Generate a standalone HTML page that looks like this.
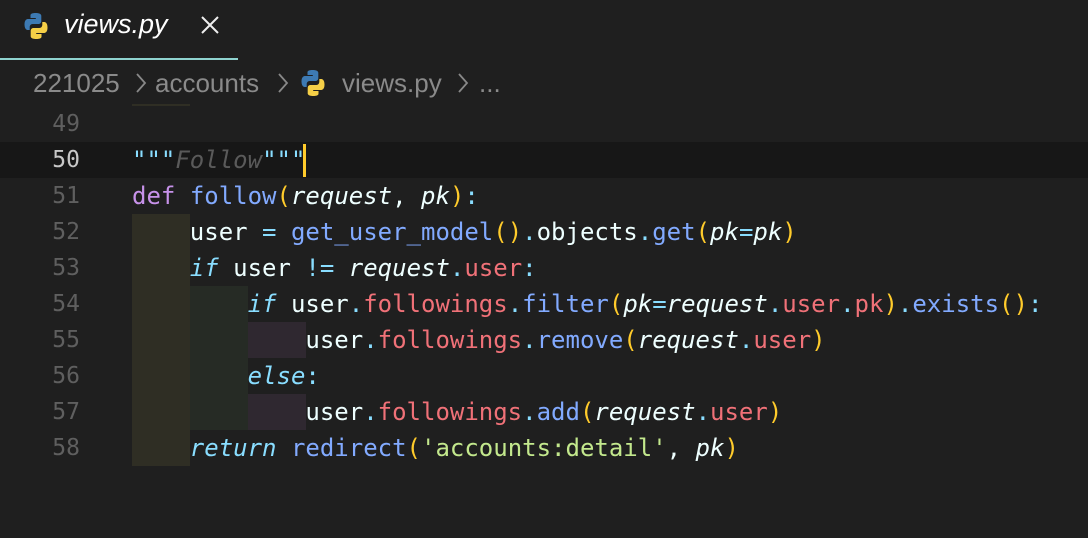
<!DOCTYPE html>
<html><head><meta charset="utf-8"><style>
body{margin:0;width:1088px;height:538px;background:#1f1f1f;overflow:hidden;font-family:"Liberation Sans",sans-serif;position:relative}
.tabbar{position:absolute;left:0;top:0;width:1088px;height:60px;background:#1f1f1f}
.tab{position:absolute;left:0;top:0;width:238px;height:58px;border-bottom:2px solid #8fd3cf}
.tabname{position:absolute;left:64px;top:9px;font-size:27px;font-style:italic;color:#fff}
.bc{position:absolute;top:68px;font-size:26px;color:#8a8a8a;white-space:nowrap}
.ln{position:absolute;left:0;width:80px;text-align:right;font-family:"DejaVu Sans Mono",monospace;font-size:23px;color:#5f5f5f;height:36px;line-height:36px}
.code{position:absolute;left:132px;font-family:"DejaVu Sans Mono",monospace;font-size:24px;height:36px;line-height:36px;white-space:pre;color:#eeffff}
.p{color:#c792ea}.f{color:#82aaff}.y{color:#ffcb2b}.i{font-style:italic}.r{color:#f07178}.k{color:#89ddff;font-style:italic}.s{color:#c3e88d}.c{color:#89ddff}.g{color:#5a5a5a;font-style:italic}
.blk{position:absolute}
.chev{position:absolute;top:73px}
</style></head><body>
<div class="tabbar"><div class="tab"></div>
<svg style="position:absolute;left:22px;top:12px" width="28" height="28" viewBox="0 0 28 28"><path d="M13.5 1C8 1 8.5 3.4 8.5 3.4V6h5.3v1H6.2S2.5 6.6 2.5 12.4s3.2 5.6 3.2 5.6h2v-2.8s-.1-3.2 3.2-3.2h5.4s3 .1 3-2.9V3.9S19.8 1 13.5 1z" fill="#3d7ab3"/><path d="M14.5 27c5.5 0 5-2.4 5-2.4V22h-5.3v-1h7.6s3.7.4 3.7-5.4-3.2-5.6-3.2-5.6h-2v2.8s.1 3.2-3.2 3.2h-5.4s-3-.1-3 2.9v5.2S8.2 27 14.5 27z" fill="#f5cf47"/></svg>
<div class="tabname">views.py</div>
<svg style="position:absolute;left:201px;top:16px" width="18" height="18" viewBox="0 0 18 18"><path d="M1 1L17 17M17 1L1 17" stroke="#eee" stroke-width="2"/></svg>
</div>
<div class="bc" style="left:33px">221025</div>
<svg class="chev" style="left:135px" width="12" height="20" viewBox="0 0 12 20"><path d="M2 1L10 10L2 19" stroke="#888" stroke-width="1.8" fill="none"/></svg>
<div class="bc" style="left:155px">accounts</div>
<svg class="chev" style="left:277px" width="12" height="20" viewBox="0 0 12 20"><path d="M2 1L10 10L2 19" stroke="#888" stroke-width="1.8" fill="none"/></svg>
<svg style="position:absolute;left:299px;top:69px" width="28" height="28" viewBox="0 0 28 28"><path d="M13.5 1C8 1 8.5 3.4 8.5 3.4V6h5.3v1H6.2S2.5 6.6 2.5 12.4s3.2 5.6 3.2 5.6h2v-2.8s-.1-3.2 3.2-3.2h5.4s3 .1 3-2.9V3.9S19.8 1 13.5 1z" fill="#3d7ab3"/><path d="M14.5 27c5.5 0 5-2.4 5-2.4V22h-5.3v-1h7.6s3.7.4 3.7-5.4-3.2-5.6-3.2-5.6h-2v2.8s.1 3.2-3.2 3.2h-5.4s-3-.1-3 2.9v5.2S8.2 27 14.5 27z" fill="#f5cf47"/></svg>
<div class="bc" style="left:342px">views.py</div>
<svg class="chev" style="left:457px" width="12" height="20" viewBox="0 0 12 20"><path d="M2 1L10 10L2 19" stroke="#888" stroke-width="1.8" fill="none"/></svg>
<div class="bc" style="left:479px">...</div>
<div class="blk" style="left:132px;top:104px;width:58px;height:2px;background:#2f2e24"></div>
<div class="blk" style="left:0;top:142px;width:1088px;height:36px;background:#171717"></div>
<div class="blk" style="left:303px;top:144px;width:3px;height:33px;background:#ffcb2b"></div>
<div class="blk" style="left:132px;top:214px;width:58px;height:252px;background:#2f2e24"></div>
<div class="blk" style="left:190px;top:286px;width:58px;height:144px;background:#262b25"></div>
<div class="blk" style="left:248px;top:322px;width:58px;height:36px;background:#2f2830"></div>
<div class="blk" style="left:248px;top:394px;width:58px;height:36px;background:#2f2830"></div>
<div class="ln" style="top:106px">49</div>
<div class="ln" style="top:142px;color:#c8c8c8">50</div>
<div class="ln" style="top:178px">51</div>
<div class="ln" style="top:214px">52</div>
<div class="ln" style="top:250px">53</div>
<div class="ln" style="top:286px">54</div>
<div class="ln" style="top:322px">55</div>
<div class="ln" style="top:358px">56</div>
<div class="ln" style="top:394px">57</div>
<div class="ln" style="top:430px">58</div>
<div class="code" style="top:142px"><span class="c">"""</span><span class="g">Follow</span><span class="c">"""</span></div>
<div class="code" style="top:178px"><span class="p">def</span> <span class="f">follow</span><span class="y">(</span><span class="i">request</span>, <span class="i">pk</span><span class="y">)</span><span class="c">:</span></div>
<div class="code" style="top:214px">    user <span class="c">=</span> <span class="f">get_user_model</span><span class="y">()</span><span class="c">.</span>objects<span class="c">.</span><span class="f">get</span><span class="y">(</span><span class="i">pk</span><span class="c">=</span><span class="i">pk</span><span class="y">)</span></div>
<div class="code" style="top:250px">    <span class="k">if</span> user <span class="c">!=</span> <span class="i">request</span><span class="c">.</span><span class="r">user</span><span class="c">:</span></div>
<div class="code" style="top:286px">        <span class="k">if</span> user<span class="c">.</span><span class="r">followings</span><span class="c">.</span><span class="f">filter</span><span class="y">(</span><span class="i">pk</span><span class="c">=</span><span class="i">request</span><span class="c">.</span><span class="r">user</span><span class="c">.</span><span class="r">pk</span><span class="y">)</span><span class="c">.</span><span class="f">exists</span><span class="y">()</span><span class="c">:</span></div>
<div class="code" style="top:322px">            user<span class="c">.</span><span class="r">followings</span><span class="c">.</span><span class="f">remove</span><span class="y">(</span><span class="i">request</span><span class="c">.</span><span class="r">user</span><span class="y">)</span></div>
<div class="code" style="top:358px">        <span class="k">else</span><span class="c">:</span></div>
<div class="code" style="top:394px">            user<span class="c">.</span><span class="r">followings</span><span class="c">.</span><span class="f">add</span><span class="y">(</span><span class="i">request</span><span class="c">.</span><span class="r">user</span><span class="y">)</span></div>
<div class="code" style="top:430px">    <span class="k">return</span> <span class="f">redirect</span><span class="y">(</span><span class="s">'accounts:detail'</span>, <span class="i">pk</span><span class="y">)</span></div>
</body></html>
